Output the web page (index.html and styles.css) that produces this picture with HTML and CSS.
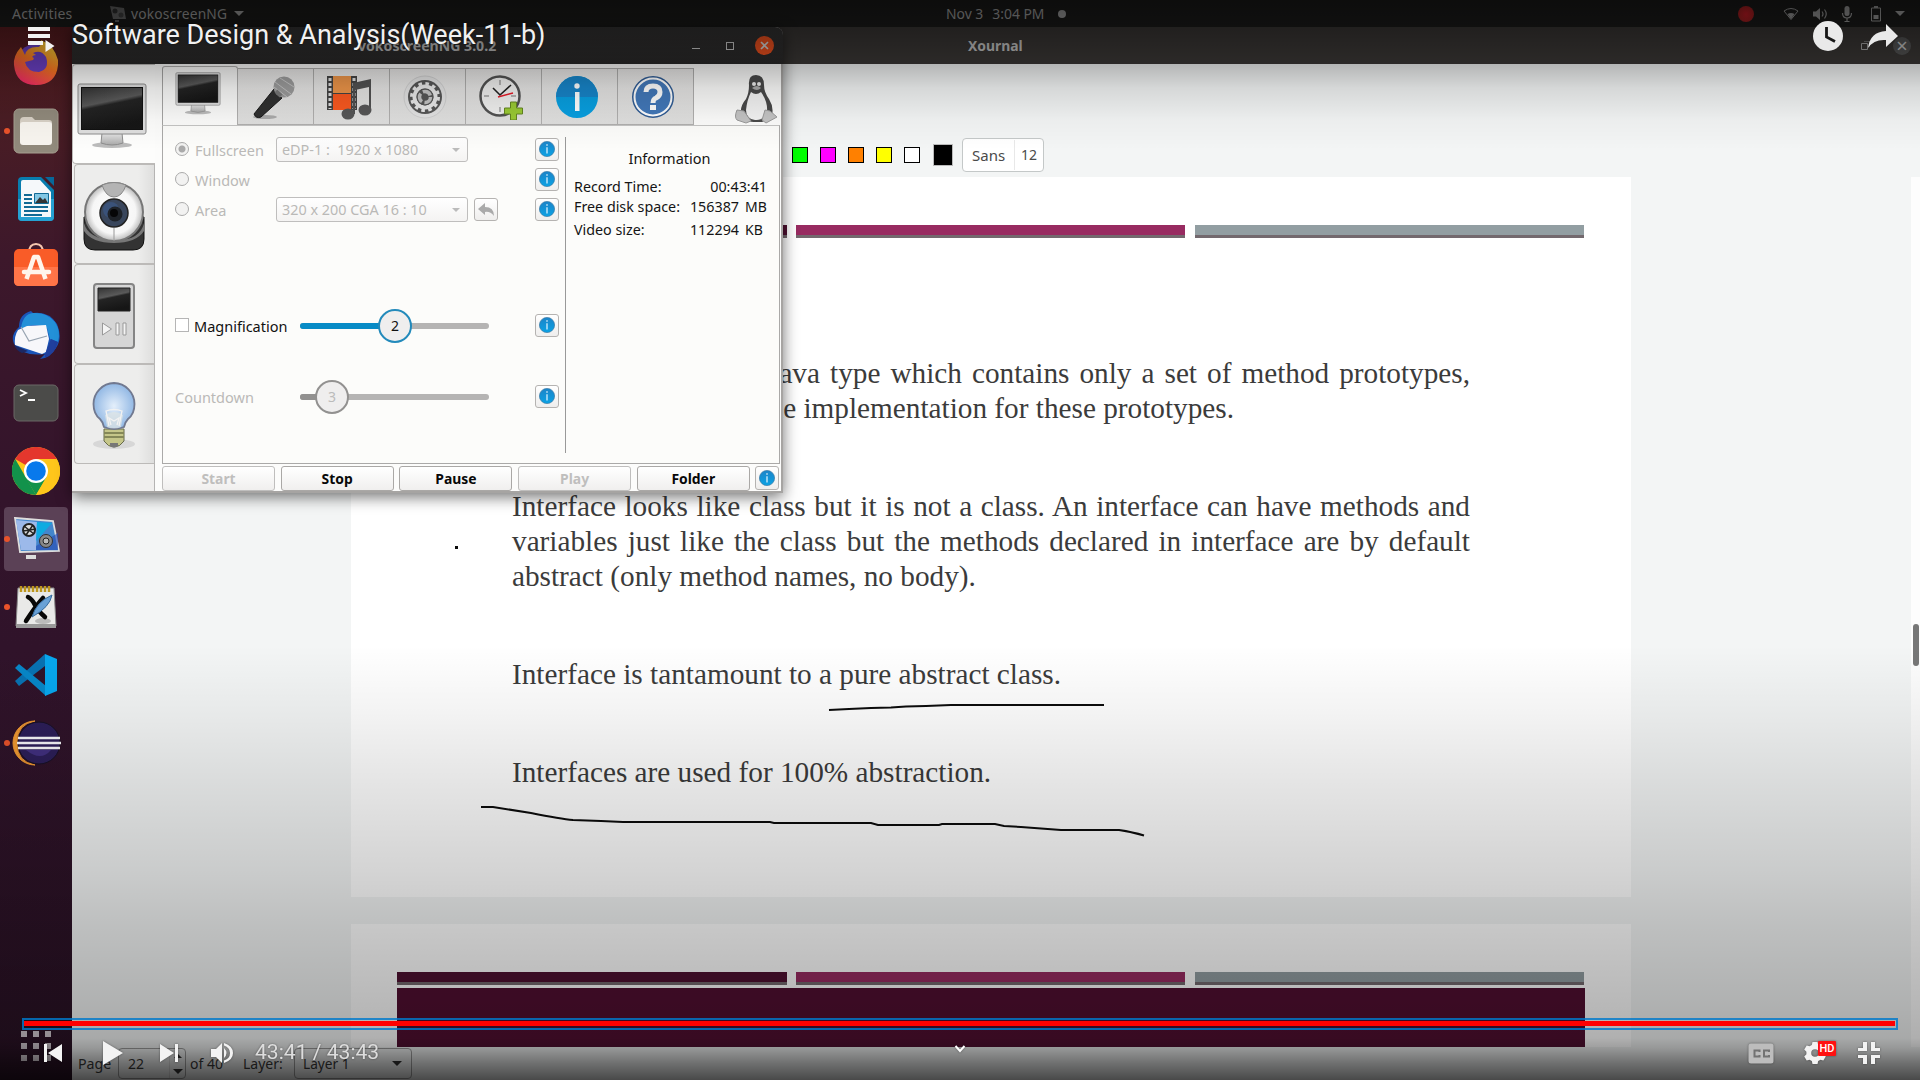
FILE: index.html
```html
<!DOCTYPE html>
<html lang="en">
<head>
<meta charset="utf-8">
<title>Software Design &amp; Analysis(Week-11-b)</title>
<link rel="stylesheet" href="styles.css">
</head>
<body>
<svg width="0" height="0" class="defs">
  <defs>
    <linearGradient id="screen" x1="0" y1="0" x2=".3" y2="1"><stop offset="0" stop-color="#333"/><stop offset=".42" stop-color="#5a5a5a"/><stop offset=".5" stop-color="#242424"/><stop offset="1" stop-color="#161616"/></linearGradient>
    <linearGradient id="infoBlue" x1="0" y1="0" x2="0" y2="1"><stop offset="0" stop-color="#1c84c8"/><stop offset="1" stop-color="#0ba2e4"/></linearGradient>
    <linearGradient id="metal" x1="0" y1="0" x2="0" y2="1"><stop offset="0" stop-color="#e6e6e6"/><stop offset="1" stop-color="#a9a9a9"/></linearGradient>
    <linearGradient id="fox" x1=".8" y1="0" x2=".3" y2="1"><stop offset="0" stop-color="#ffe13a"/><stop offset=".5" stop-color="#ff7a22"/><stop offset="1" stop-color="#f52a68"/></linearGradient>
    <radialGradient id="ball"><stop offset="0" stop-color="#fff"/><stop offset=".75" stop-color="#f6f6f6"/><stop offset="1" stop-color="#bbb"/></radialGradient>
    <radialGradient id="bulb"><stop offset="0" stop-color="#e4effb"/><stop offset="1" stop-color="#92b8e4"/></radialGradient>
    <symbol id="monitor" viewBox="0 0 70 66"><ellipse cx="35" cy="62" rx="20" ry="3" fill="#bbb"/><path d="M25 50h20l1 10q-11 4-22 0z" fill="url(#metal)" stroke="#8d8d8d"/><rect x="1" y="1" width="68" height="50" rx="2" fill="#dedede" stroke="#8c8c8c"/><rect x="4.500" y="4.500" width="61" height="42" fill="url(#screen)" stroke="#111"/></symbol>
    <symbol id="info" viewBox="0 0 16 16"><circle cx="8" cy="8" r="7.600" fill="url(#infoBlue)" stroke="#3b7ba6" stroke-width=".7"/><circle cx="8" cy="4" r=".8" fill="#fff"/><path d="M7.400 6.200h1.200v6.400H7.400z" fill="#e8f6ff"/></symbol>
  </defs>
</svg>

<div class="desktop">
  <header class="topbar">
    <span class="activities">Activities</span>
    <svg class="app-ico" width="16" height="16" viewBox="0 0 16 16"><path d="M0 0l14 2 2 11H3z" fill="#6b6b6b"/><path d="M5 14h4v2H5z" fill="#666"/><circle cx="5" cy="5" r="2.500" fill="#333"/><circle cx="11" cy="9" r="2.500" fill="#444"/></svg>
    <span class="app-name">vokoscreenNG</span>
    <i class="tri"></i>
    <div class="clock"><span>Nov 3</span><span>3:04 PM</span><i></i></div>
    <div class="tray">
      <i class="rec"></i>
      <svg width="16" height="14" viewBox="0 0 16 14"><path d="M1 4Q8-1 15 4L8 12.500z" fill="none" stroke="#a3a3a3"/><path d="M4.500 7Q8 5 11.500 7L8 12z" fill="#a3a3a3"/></svg>
      <svg width="16" height="14" viewBox="0 0 16 14"><path d="M1 4.500h3L8 1v12L4 9.500H1z" fill="#a3a3a3"/><path d="M10 4.500q2 2.500 0 5M12.500 2.500q3.500 4.500 0 9" fill="none" stroke="#a3a3a3" stroke-width="1.200"/></svg>
      <svg width="12" height="16" viewBox="0 0 12 16"><rect x="3.500" y="0" width="5" height="10" rx="2.500" fill="#a3a3a3"/><path d="M1.500 7q0 5 4.500 5t4.500-5M6 12v3M3.500 15.500h5" fill="none" stroke="#a3a3a3" stroke-width="1.200"/></svg>
      <svg class="batt" width="12" height="16" viewBox="0 0 12 16"><path d="M1.500 2h9v13h-9z" fill="none" stroke="#a3a3a3"/><path d="M4 0h4v2H4zM3.500 9h5v4h-5z" fill="#a3a3a3"/></svg>
      <i class="tri"></i>
    </div>
  </header>

  <div class="workspace">
    <nav class="dock">
      <div class="app"><svg class="up1" width="48" height="48" viewBox="0 0 48 48"><circle cx="24" cy="26" r="20" fill="#6c41c7"/><path d="M46 22Q42 7 29 2q1 4-2 7-12-1-14 8l-4-8Q1 18 2 27q2 20 22 20t22-20zM21 15q8-4 13 4 4 12-7 15-12 0-14-10l8-2q2-2-1-3 1-2 4-2z" fill="url(#fox)" fill-rule="evenodd"/></svg></div>
      <div class="app run"><svg width="46" height="46" viewBox="0 0 46 46"><rect x="1" y="1" width="44" height="44" rx="5" fill="#918a7c" stroke="#a69f90"/><path d="M7 13q0-4 4-4h8l3 3h14q3 0 3 3v5H7z" fill="#d8d1c6"/><rect x="7" y="14" width="32" height="23" rx="3" fill="#f8f5ef"/></svg></div>
      <div class="app"><svg width="38" height="46" viewBox="0 0 38 46"><path d="M5 1h19l13 13v27q0 4-4 4H5q-4 0-4-4V5q0-4 4-4z" fill="#087dae"/><path d="M1 23h36v18q0 4-4 4H5q-4 0-4-4z" fill="#25a2d3"/><path d="M6 4h17l11 12v25H4V6q0-2 2-2z" fill="#f5f8fa"/><path d="M28 1h9v9z" fill="#07689a"/><path d="M7 19h8M7 23h8M7 27h8M7 31h24M7 35h24M7 39h18" stroke="#116a95" stroke-width="2"/><path d="M17.500 17.500h14v10h-14z" fill="#82c7e4" stroke="#116a95"/><path d="M18 27l5-6 3 3 2-2 3 5z" fill="#333"/></svg></div>
      <div class="app"><svg class="up3" width="46" height="46" viewBox="0 0 46 46"><path d="M16 11q0-9 7-9t7 9" fill="none" stroke="#f4c6af" stroke-width="2"/><rect x="1" y="7" width="44" height="37" rx="5" fill="#f95c28"/><path d="M1 25h44v14q0 5-5 5H6q-5 0-5-5z" fill="#ff7548"/><path d="M13.500 37l7.500-22h4l7.500 22" stroke="#fff5eb" stroke-width="4.500" fill="none" stroke-linejoin="round"/><path d="M11 30h25" stroke="#fff5eb" stroke-width="4.500" stroke-linecap="round"/></svg></div>
      <div class="app"><svg width="50" height="50" viewBox="0 0 50 50"><path d="M8 17Q8 4 20 1l2 2Q38 1 46 14q6 14-1 24-6 10-16 11l5-5Q12 47 3 34-1 25 8 17z" fill="#1a55b8"/><path d="M10 18Q12 4 22 3q14-1 22 9 6 9 3 20l-8-3-3-11q-14-7-26 2z" fill="#2390d8"/><path d="M16 16L35 15l3 14-3 13-4 2L4 35q-1-9 3-15z" fill="#f7f7fa"/><path d="M10 17l8 14 18-5" stroke="#98a4b1" stroke-width="1.200" fill="none"/><path d="M34 44l6-15 7 3q-3 12-13 16z" fill="#203f9c"/><path d="M3 35l14 6-6 2q-6-3-8-8z" fill="#1b2864"/></svg></div>
      <div class="app"><svg width="46" height="38" viewBox="0 0 46 38"><rect x="1" y="1" width="44" height="36" rx="5" fill="#4b4b49" stroke="#6b6966"/><path d="M7 6l6 3-6 3M15 16h7" stroke="#fff" stroke-width="1.800" fill="none"/></svg></div>
      <div class="app"><svg width="48" height="48" viewBox="0 0 48 48"><circle cx="24" cy="24" r="24" fill="#ffc61b"/><path d="M24 24L3.200 12A24 24 0 0 1 44.800 12z" fill="#e4372d"/><path d="M3.200 12L24 48A24 24 0 0 1 3.200 12z" fill="#12924b"/><path d="M13 30l11 18 11-18z" fill="#12924b"/><path d="M34.400 30L24 48A24 24 0 0 0 44.800 12H24z" fill="#ffc61b"/><circle cx="24" cy="24" r="12" fill="#fff"/><circle cx="24" cy="24" r="9.800" fill="#0879ec"/></svg></div>
      <div class="app run active"><svg width="48" height="46" viewBox="0 0 48 46"><path d="M3 2l38 3 6 30-39 1z" fill="#4386cc" stroke="#ddd" stroke-width="1.800"/><path d="M4 4l21 2-1 28H9z" fill="#9cb9ea"/><path d="M25 6l15 1-16 18z" fill="#0eabe1"/><path d="M24 30L46 17v17H24z" fill="#294eb6" opacity=".65"/><circle cx="17" cy="14" r="6" fill="#ddd" stroke="#222" stroke-width="2"/><path d="M12 10l10 8M21 9l-7 10M11 15l13-2" stroke="#222" stroke-width="1.500"/><circle cx="34" cy="25" r="6.500" fill="#888" stroke="#333"/><circle cx="34" cy="25" r="3" fill="#bbb" stroke="#222"/><path d="M14 39h10v4H14z" fill="#ddd"/></svg></div>
      <div class="app run"><svg width="42" height="46" viewBox="0 0 42 46"><path d="M3 4h36l2 38H1z" fill="#e9e9e8" stroke="#888"/><path d="M1 40h40v4H1z" fill="#999"/><path d="M6 2v6M10 2v6M14 2v6M18 2v6M22 2v6M26 2v6M30 2v6M34 2v6" stroke="#bd961e" stroke-width="2.500"/><ellipse cx="28" cy="37" rx="8" ry="3" fill="#bbb"/><path d="M13 13q4 2 7 8t10 12M28 14q-8 9-17 23" stroke="#080808" stroke-width="4.500" fill="none" stroke-linecap="round"/><path d="M37 11q-2 12-20 22 4-15 20-22z" fill="#69a1d6" stroke="#366b9e"/></svg></div>
      <div class="app"><svg width="44" height="44" viewBox="0 0 44 44"><path d="M1 28l30-27v12L5 33z" fill="#0872b2"/><path d="M1 15l4-4 27 22v10z" fill="#0787c8"/><path d="M31 1l12 5v32l-12 5z" fill="#07a7ee"/></svg></div>
      <div class="app run"><svg width="50" height="46" viewBox="0 0 50 46"><path d="M24 1A22 22 0 0 0 24 45Q6 42 6 23T24 1z" fill="#f19a32" stroke="#f19a32"/><circle cx="28" cy="23" r="21" fill="#2c1e58" stroke="#171125"/><path d="M15 30h25q-10 12-25 0z" fill="#41307f"/><path d="M7 18h42M6 23h44M7 28h42" stroke="#f7f7fa" stroke-width="2.300"/></svg></div>
      <svg class="apps-grid" width="32" height="32" viewBox="0 0 32 32" fill="#d6cdd4"><path d="M1 1h6v6H1zM13 1h6v6h-6zM25 1h6v6h-6zM1 13h6v6H1zM13 13h6v6h-6zM25 13h6v6h-6zM1 25h6v6H1zM13 25h6v6h-6zM25 25h6v6h-6z"/></svg>
    </nav>

    <main class="xournal">
      <div class="x-title"><span>Xournal</span><svg width="9" height="9" viewBox="0 0 9 9" fill="none" stroke="#aaa"><path d="M.5 2.500h6v6h-6zM3 0h6v6"/></svg><b>×</b></div>
      <div class="x-tools"><i class="sw green"></i><i class="sw magenta"></i><i class="sw orange"></i><i class="sw yellow"></i><i class="sw white"></i><i class="sw black"></i><div class="font"><span>Sans</span><span>12</span></div></div>
      <div class="canvas">
        <div class="pages">
          <section class="page first">
            <div class="bars"><i></i><i></i><i></i></div>
            <div class="slide-text">
              <p class="p1"><span class="just l1">Java type which contains only a set of method prototypes,</span><span class="l2">the implementation for these prototypes.</span></p>
              <p class="p2"><span class="just">Interface looks like class but it is not a class. An interface can have methods and</span><span class="just">variables just like the class but the methods declared in interface are by default</span><span>abstract (only method names, no body).</span></p>
              <p class="p3">Interface is tantamount to a pure abstract class.</p>
              <p class="p4">Interfaces are used for 100% abstraction.</p>
            </div>
            <svg class="ink" width="1280" height="720" viewBox="351 177 1280 720" fill="none" stroke="#0c0c0c" stroke-width="2"><path d="M829 710l20-1 22-1 20-.5 15-1 20-.5 25-1h153"/><path d="M481 807h12l38 6q30 6 42 7l28 1 22 1h147l4 1h97l7 2h61l3-1h53l9 2 17 1 20 1.500 20 1.500h58q14 2 25 5.500"/><path d="M455 547.500h3" stroke-width="3"/></svg>
          </section>
          <section class="page second"><div class="bars"><i></i><i></i><i></i></div><div class="block"></div></section>
        </div>
        <div class="scroll"><i></i></div>
      </div>
      <footer class="status"><span class="s-page">Page</span><div class="spin"><span>22</span><div><i class="up"></i><i class="down"></i></div></div><span class="s-of">of 40</span><span class="s-layer">Layer:</span><div class="layer"><span>Layer 1</span><i class="down"></i></div></footer>
    </main>
  </div>

  <div class="voko">
    <div class="v-title"><span>vokoscreenNG 3.0.2</span><i class="min"></i><i class="max"></i><svg width="19" height="19" viewBox="0 0 19 19"><circle cx="9.500" cy="9.500" r="9.500" fill="#f2521f"/><path d="M6 6l7 7M13 6l-7 7" stroke="#ddd" stroke-width="1.600"/></svg></div>
    <div class="v-main">
      <div class="v-side">
        <div class="vt sel"><svg width="70" height="66"><use href="#monitor"/></svg></div>
        <div class="vt"><svg width="64" height="70" viewBox="0 0 64 70"><path d="M2 36v22q0 11 11 11h38q11 0 11-11V36z" fill="#333" stroke="#111"/><path d="M2 42q4 16 30 17t30-17v8q-8 12-30 12T2 50z" fill="#777"/><circle cx="32" cy="31" r="29" fill="url(#ball)" stroke="#777" stroke-width="2"/><path d="M20 4q12-5 24 0-4 12-12 12T20 4z" fill="#b4b4b4" stroke="#888"/><circle cx="32" cy="32" r="14" fill="#39465c" stroke="#222" stroke-width="1.500"/><circle cx="29" cy="29" r="8" fill="#3c5a8c" opacity=".6"/><circle cx="33" cy="33" r="7.500" fill="#1e2228"/><circle cx="32" cy="32" r="4" fill="#060607"/><path d="M32 47v13" stroke="#999"/></svg></div>
        <div class="vt"><svg width="42" height="66" viewBox="0 0 42 66"><rect x="1" y="1" width="40" height="64" rx="3" fill="#d6d6d6" stroke="#858585" stroke-width="2"/><path d="M5 5h32v23H5z" fill="url(#screen)" stroke="#222"/><path d="M9.500 40v12l9-6zM23 40h3v12h-3zM30 40h3v12h-3z" fill="#f4f4f4" stroke="#999"/></svg></div>
        <div class="vt"><svg width="46" height="70" viewBox="0 0 46 70"><ellipse cx="23" cy="63" rx="21" ry="5" fill="#d7d7d7"/><path d="M13 48h20v12q-4 6-10 6t-10-6z" fill="#c5c689" stroke="#666a4b"/><path d="M13 52h20M13 56h20" stroke="#858858" stroke-width="2"/><path d="M19 62h8v3q-4 3-8 0z" fill="#777"/><path d="M23 2a21 21 0 0 0-20.500 21q0 10 6.500 15 3 3 4 8 10 4 20 0 1-5 4-8 6.500-5 6.500-15A21 21 0 0 0 23 2z" fill="url(#bulb)" stroke="#717990" stroke-width="1.800"/><path d="M14 34q9-6 18 0l-2 12q-7 3-14 0z" fill="#dfe6e4" opacity=".7"/><path d="M18 45l-3-15q8-3 16 0l-3 15M20 44l-2-7 5 3 5-3-2 7" fill="none" stroke="#f2f2f2" stroke-width="1.300"/></svg></div>
      </div>
      <div class="v-content">
        <div class="tabs">
          <div class="tab sel"><svg width="46" height="43"><use href="#monitor"/></svg></div>
          <div class="tab"><svg width="46" height="46" viewBox="0 0 46 46"><ellipse cx="15" cy="43" rx="12" ry="2" fill="#aaa"/><path d="M24 15l8 9L11 43q-5 2-7-3z" fill="#303030" stroke="#181818"/><circle cx="34" cy="13" r="10.500" fill="#9c9c9c"/><path d="M25 8l16 12M24 13l13 10M30 4l14 9" stroke="#c4c4c4" stroke-width="1"/><path d="M26 17l5 5" stroke="#777" stroke-width="4"/></svg></div>
          <div class="tab"><svg width="46" height="46" viewBox="0 0 46 46"><path d="M1 2h30v34H1z" fill="#444"/><path d="M7 2h18v17H7z" fill="#ed9549"/><path d="M7 20h18v16H7z" fill="#fb5920"/><path d="M4 4v31M28 4v31" stroke="#ddd" stroke-width="3" stroke-dasharray="3 2"/><path d="M27 9l18-4v31h-2V13l-14 3v24h-2z" fill="#525252"/><ellipse cx="22" cy="40" rx="6.500" ry="5.500" fill="#575757"/><ellipse cx="39" cy="36" rx="6.500" ry="5.500" fill="#575757"/></svg></div>
          <div class="tab"><svg width="44" height="44" viewBox="0 0 44 44"><circle cx="22" cy="22" r="21" fill="#e3e3e3" stroke="#d0d0d0"/><circle cx="22" cy="22" r="17" fill="#575757"/><circle cx="22" cy="22" r="10.500" fill="none" stroke="#e9e9e9" stroke-width="4"/><circle cx="22" cy="22" r="13.500" fill="none" stroke="#e9e9e9" stroke-width="3" stroke-dasharray="3.600 3.468"/><circle cx="22" cy="22" r="8.500" fill="#575757"/><circle cx="22" cy="22" r="5.500" fill="none" stroke="#c4c4c4" stroke-width="3.500" stroke-dasharray="9 2.520"/></svg></div>
          <div class="tab"><svg width="46" height="46" viewBox="0 0 46 46"><circle cx="22" cy="22" r="19.500" fill="#f0f0ef" stroke="#525252" stroke-width="2.500"/><path d="M22 6v5M22 33v5M6 22h5M33 22h5" stroke="#777"/><path d="M15 14l7 7 11-10" stroke="#222" stroke-width="1.600" fill="none"/><path d="M20 23l15-4" stroke="#e71c29" stroke-width="1.500"/><path d="M32.500 28h6v6h6v6h-6v6h-6v-6h-6v-6h6z" fill="#9aca34" stroke="#648620"/></svg></div>
          <div class="tab"><svg width="44" height="44" viewBox="0 0 44 44"><circle cx="22" cy="22" r="21" fill="#089fe0"/><path d="M1 22a21 21 0 0 1 42 0z" fill="#1785c9"/><circle cx="22" cy="11" r="2.700" fill="#fff"/><path d="M20 17h4.500v19H20z" fill="#fff"/></svg></div>
          <div class="tab"><svg width="44" height="44" viewBox="0 0 44 44"><circle cx="22" cy="22" r="20" fill="#4278b9" stroke="#315d95" stroke-width="2"/><circle cx="22" cy="22" r="18.500" fill="none" stroke="#fff" stroke-width="2"/><path d="M15 17q0-6 7-6t7 6q0 4-4 6-3 1-3 5" fill="none" stroke="#fff" stroke-width="5"/><path d="M19 30h6v5h-6z" fill="#fff"/></svg></div>
          <svg class="tux" width="42" height="50" viewBox="0 0 42 50"><path d="M14 11Q13 1 21 1t8 10q0 7 5 14 5 8 3 16-4 8-16 7-13 1-15-9-1-7 5-14 3-6 3-14z" fill="#494949"/><path d="M16 18q5 4 10 0 7 10 6 20-4 9-12 8-9-1-9-10 1-10 5-18z" fill="#f3f3f3"/><path d="M2 36l7 1 7 10-5 2-9-3q-3-3 0-10zM30 36l5 1q6 5 7 6l-11 6-4-3z" fill="#c3c3c3" stroke="#999"/><circle cx="19" cy="10" r="2" fill="#eee"/><circle cx="24" cy="10" r="2" fill="#eee"/><path d="M17 14q5-4 9 0-4 4-9 0z" fill="#aaa"/></svg>
        </div>
        <div class="pane">
          <div class="options">
            <div class="row r1 dis"><i class="radio on"></i><label>Fullscreen</label><div class="combo first-combo"><span>eDP-1 :&nbsp; 1920 x 1080</span><i></i></div><div class="ib"><svg width="16" height="16"><use href="#info"/></svg></div></div>
            <div class="row dis"><i class="radio"></i><label>Window</label><div class="ib"><svg width="16" height="16"><use href="#info"/></svg></div></div>
            <div class="row dis"><i class="radio"></i><label>Area</label><div class="combo"><span>320 x 200 CGA 16 : 10</span><i></i></div><div class="ib undo"><svg width="18" height="16" viewBox="0 0 18 16"><path d="M1 7l7-6v4q9 0 9 9-4-5-9-4v3z" fill="#aaa"/></svg></div><div class="ib"><svg width="16" height="16"><use href="#info"/></svg></div></div>
            <div class="row mag"><i class="check"></i><label>Magnification</label><div class="slider s2"><i></i><b>2</b></div><div class="ib"><svg width="16" height="16"><use href="#info"/></svg></div></div>
            <div class="row cnt dis"><label>Countdown</label><div class="slider s3"><i></i><b>3</b></div><div class="ib"><svg width="16" height="16"><use href="#info"/></svg></div></div>
          </div>
          <div class="facts">
            <h3>Information</h3>
            <div class="fact"><span>Record Time:</span><b>00:43:41</b></div>
            <div class="fact f2"><span>Free disk space:</span><b>156387</b><em>MB</em></div>
            <div class="fact f3"><span>Video size:</span><b>112294</b><em>KB</em></div>
          </div>
        </div>
        <div class="btns"><button class="off">Start</button><button>Stop</button><button>Pause</button><button class="off">Play</button><button>Folder</button><div class="ib"><svg width="16" height="16"><use href="#info"/></svg></div></div>
      </div>
    </div>
  </div>
</div>

<div class="player">
  <div class="p-top">
    <svg class="list" width="27" height="26" viewBox="0 0 27 26" fill="#f2f2f2"><path d="M0 0h22v4H0zM0 7h22v4H0zM0 14h15v4H0zM17.500 13l9 6-9 6z"/></svg>
    <h1>Software Design &amp; Analysis(Week-11-b)</h1>
    <svg class="later" width="30" height="30" viewBox="0 0 30 30"><circle cx="15" cy="15" r="15" fill="#e9e9e9"/><path d="M13.500 6v10l8.500 4.500" stroke="#171717" stroke-width="2.800" fill="none"/></svg>
    <svg class="share" width="31" height="25" viewBox="0 0 31 25"><path d="M19 0l12 12-12 11v-7Q7 15 1 24 3 8 19 7z" fill="#e9e9e9"/></svg>
  </div>
  <div class="p-bottom">
    <div class="progress"><i></i></div>
    <div class="controls">
      <svg class="prev" width="18" height="18" viewBox="0 0 18 18"><path d="M0 0h3v18H0zM18 0v18L4 9z"/></svg>
      <svg class="play" width="20" height="24" viewBox="0 0 20 24"><path d="M0 0l20 12L0 24z"/></svg>
      <svg class="next" width="18" height="18" viewBox="0 0 18 18"><path d="M0 0l14 9-14 9zM15 0h3v18h-3z"/></svg>
      <svg class="vol" width="22" height="20" viewBox="0 0 22 20"><path d="M0 6h5l6-6v20l-6-6H0zM13 5q5 5 0 10zM13 0q9 3 9 10t-9 10v-2.500q6-2 6-7.500t-6-7.500z"/></svg>
      <span class="time">43:41 / 43:43</span>
      <svg class="chev" width="12" height="8" viewBox="0 0 12 8"><path d="M1.500 1L6 6l4.500-5" fill="none" stroke="#fff" stroke-width="2"/></svg>
      <svg class="cc" width="26" height="21" viewBox="0 0 26 21"><rect x=".5" y=".5" width="25" height="20" rx="2.500" fill="#bdbdbd"/><path d="M11.500 9V7.500h-5v6h5V12M21 9V7.500h-5v6h5V12" fill="none" stroke="#727272" stroke-width="2"/></svg>
      <div class="gear"><svg width="22" height="22" viewBox="0 0 22 22"><path fill-rule="evenodd" d="M8.500 0h5l.7 3 2.300 1.300L19.300 3.500l2.500 4-2.200 2.200v2.600l2.200 2.200-2.500 4-2.800-.8-2.300 1.300-.7 3h-5l-.7-3-2.300-1.300-2.800.8-2.500-4L2.400 12.300V9.700L.2 7.500l2.500-4 2.800.8L7.800 3zM11 7.200a3.800 3.800 0 1 0 0 7.600 3.800 3.800 0 1 0 0-7.600z"/></svg><span>HD</span></div>
      <svg class="exit" width="22" height="22" viewBox="0 0 22 22"><path d="M5 0h4v9H0V6h5zM13 0h4v6h5v3h-9zM0 13h9v9H5v-6H0zM13 13h9v3h-5v6h-4z"/></svg>
    </div>
  </div>
</div>
</body>
</html>
```
FILE: styles.css
```css
* { box-sizing: border-box; }
body { margin: 0; width: 1920px; height: 1080px; overflow: hidden; position: relative; background: #000; font-family: "Noto Sans", sans-serif; font-size: 14px; }
.defs { position: absolute; }
svg { display: block; flex: none; }
p, h1, h3 { margin: 0; font-weight: 400; }

.desktop { height: 1080px; position: relative; display: flex; flex-direction: column; }
.topbar { height: 27px; flex: none; background: #1c1c1b; color: #a8a8a8; display: flex; align-items: center; padding: 0 15px 0 12px; position: relative; }
.activities { width: 98px; font-size: 14px; letter-spacing: .22px; }
.app-name { margin: 0 5px; width: 98px; font-size: 13.800px; letter-spacing: .15px; }
.tri { border: 5px solid transparent; border-top-color: #a8a8a8; border-bottom: 0; }
.clock { display: flex; align-items: center; gap: 9px; position: absolute; left: 946px; font-size: 13.900px; white-space: nowrap; }
.clock i { width: 8px; height: 8px; border-radius: 50%; background: #a8a8a8; margin-left: 5px; }
.tray { margin-left: auto; display: flex; align-items: center; gap: 13px; }
.batt { margin-left: 4px; }
.rec { width: 16px; height: 16px; border-radius: 50%; background: radial-gradient(#d61d28, #9c2320); margin-right: 16px; }

.workspace { flex: 1; display: flex; min-height: 0; }
.dock { width: 72px; background: linear-gradient(#5a1c20, #4a1d24 90px, #3d182b 230px, #33142b 470px, #30132a 620px, #2a1225); display: flex; flex-direction: column; padding: 4px 4px 18px; }
.app { height: 64px; margin-bottom: 4px; display: flex; align-items: center; justify-content: center; border-radius: 4px; position: relative; flex: none; }
.app.active { background: #5b4156; }
.app.run::before { content: ""; position: absolute; left: 0; top: 29px; width: 6px; height: 6px; border-radius: 50%; background: #e9532b; }
.up1 { margin-bottom: 3px; }
.up3 { margin-bottom: 5px; }
.apps-grid { margin: auto 0 0 16px; }

.xournal { flex: 1; display: flex; flex-direction: column; background: #f3f5f5; min-width: 0; }
.x-title { height: 37px; flex: none; background: #3b3836; color: #c9c9c9; font-weight: 700; font-size: 13.900px; display: flex; align-items: center; padding-right: 9px; }
.x-title span { margin-left: 896px; margin-right: auto; }
.x-title svg { margin-right: 23px; }
.x-title b { width: 18px; height: 18px; border-radius: 50%; background: #555; font: 20px/17px "Noto Sans", sans-serif; text-align: center; }
.x-tools { height: 113px; flex: none; display: flex; align-items: center; padding: 69px 0 0 720px; gap: 12px; }
.sw { width: 16px; height: 16px; border: 1px solid #000; flex: none; }
.green { background: #0f0; } .magenta { background: #f0f; } .orange { background: #ff8000; } .yellow { background: #ff0; } .white { background: #fff; }
.sw.black { width: 20px; height: 22px; background: #000; border-color: #bbb; margin-left: 1px; }
.font { width: 82px; height: 34px; margin-left: -3px; border: 1px solid #c4c8c8; border-radius: 4px; background: #fff; display: flex; align-items: center; color: #4a4a4a; flex: none; }
.font span { line-height: 30px; padding-left: 9px; width: 51px; font-size: 15px; }
.font span + span { border-left: 1px solid #e8e8e8; padding-left: 6px; width: 29px; font-size: 14px; }
.canvas { height: 870px; flex: none; display: flex; justify-content: space-between; overflow: hidden; }
.pages { width: 1280px; margin-left: 279px; display: flex; flex-direction: column; gap: 27px; }
.page { background: #fff; flex: none; padding: 0 46px; position: relative; }
.first { height: 720px; padding-top: 48px; }
.second { height: 123px; padding-top: 48px; }
.bars { height: 13px; display: grid; grid-template-columns: 390px 389px 389px; column-gap: 9px; }
.bars i { background: #4e1030; border-bottom: 3px solid #73696e; }
.bars i:nth-child(2) { background: #982b61; }
.bars i:nth-child(3) { background: #929ea2; margin: 0 -1px 0 1px; }
.block { height: 60px; width: 1188px; margin-top: 3px; background: #510f31; }
.slide-text { width: 959px; margin: 117.500px 0 0 115px; font: 29.260px/35px "Liberation Serif", serif; color: #3b3b3b; }
.slide-text p { white-space: nowrap; }
.slide-text span { display: block; }
.slide-text .just { width: 958px; text-align: justify; text-align-last: justify; white-space: normal; }
.slide-text .l1 { margin-left: 256px; width: 702px; }
.l2 { text-align: right; padding-right: 237px; }
.p1 { margin-bottom: 63px; }
.p2 { margin-bottom: 63px; }
.p3 { margin-bottom: 63px; }
.ink { position: absolute; left: 0; top: 0; }
.scroll { width: 9px; background: #fdfdfd; padding: 447px 1px 0 2px; }
.scroll i { display: block; height: 42px; border-radius: 3px; background: #777; }
.status { flex: 1; display: flex; align-items: center; padding-left: 6px; color: #3a3a3a; font-size: 14px; }
.s-page { width: 40px; font-size: 14.200px; }
.spin, .layer { height: 31px; border: 1px solid #a0a0a0; border-radius: 4px; display: flex; align-items: center; }
.spin { width: 68px; padding-left: 9px; justify-content: space-between; }
.spin div { width: 16px; height: 29px; border-left: 1px solid #ddd; display: flex; flex-direction: column; justify-content: space-between; align-items: center; padding: 5px 0 4px; }
.up { border: 4px solid transparent; border-bottom-color: #333; border-top: 0; }
.down { border: 5px solid transparent; border-top-color: #333; border-bottom: 0; }
.s-of { margin-left: 4px; width: 53px; white-space: nowrap; }
.s-layer { width: 51px; font-size: 14px; }
.layer { width: 118px; padding: 0 9px 0 8px; justify-content: space-between; font-size: 13.700px; }

/* recorder window */
.voko { position: absolute; left: 72px; top: 27px; width: 711px; height: 466px; display: flex; flex-direction: column; border: solid #a6a4a2; border-width: 0 2px 2px 0; background: #f3f2f1; border-radius: 0 8px 0 0; box-shadow: 0 4px 15px rgba(0,0,0,.55); }
.v-title { height: 37px; flex: none; margin-right: -2px; border-radius: 0 8px 0 0; background: linear-gradient(#343333, #292828); display: flex; align-items: center; color: #bdbdbd; font-size: 14.100px; font-weight: 700; padding-right: 9px; }
.v-title span { margin: 0 auto 0 286px; white-space: nowrap; }
.min { width: 8px; height: 1px; background: #ccc; margin: 5px 26px 0 0; }
.max { width: 8px; height: 8px; border: 1px solid #ccc; margin-right: 21px; }
.v-main { flex: 1; display: flex; min-height: 0; }
.v-side { width: 83px; flex: none; border-right: 1px solid #b5b4b3; padding-left: 2px; background: #f0efee; }
.vt { height: 100px; border: 1px solid #bcbab8; border-top-width: 1px; border-right: 0; border-radius: 4px 0 0 4px; background: linear-gradient(90deg, #ededec 80%, #dededd); display: flex; align-items: center; justify-content: center; padding: 3px 2px 0 0; }
.vt.sel { margin-left: -2px; background: #fdfdfc; margin-right: -1px; padding: 3px 4px 0 0; }
.v-content { flex: 1; display: flex; flex-direction: column; padding: 2px 0 1px 7px; background: #fcfcfb; min-width: 0; }
.tabs { height: 59px; display: flex; align-items: flex-end; flex: none; }
.tab { width: 76px; height: 57px; border: 1px solid #b0afae; border-left: 0; background: linear-gradient(#ecebea, #dededd); display: flex; align-items: center; justify-content: center; padding-right: 5px; }
.tab.sel { height: 59px; border-left: 1px solid #a5a4a3; border-bottom: 0; border-radius: 3px 3px 0 0; background: #fbfbfa; padding-bottom: 6px; }
.tux { margin: 0 4px 1px auto; }
.pane { height: 339px; width: 618px; border: 1px solid #aaa9a8; border-top-color: #c4c4c3; display: flex; flex: none; padding: 11px 0 10px 12px; background: #fcfcfa; }
.options { width: 391px; border-right: 1px solid #999; }
.row { height: 25px; display: flex; align-items: center; margin-bottom: 5px; padding-right: 6px; white-space: nowrap; }
.row .ib:last-child { margin-left: auto; margin-bottom: 1px; }
.dis { color: #bab9b7; }
.radio { width: 14px; height: 14px; border: 1px solid #aaa; border-radius: 50%; margin: 0 6px 1px 0; background: #f2f2f1; flex: none; }
.radio.on { background: radial-gradient(circle, #aaa 0 3px, #f2f2f1 4px); }
.row label { width: 81px; font-size: 14.500px; }
.combo { width: 192px; height: 25px; border: 1px solid #bfbebd; border-radius: 3px; background: linear-gradient(#fff, #f4f3f2); display: flex; align-items: center; justify-content: space-between; padding: 0 7px 0 5px; font-size: 14.400px; }
.first-combo { font-size: 14.400px; }
.combo i { border: 4px solid transparent; border-top-color: #bbb; border-bottom: 0; }
.ib { width: 24px; height: 23px; border: 1px solid #b5b3b1; border-radius: 3px; background: linear-gradient(#fff, #efeeed); display: flex; align-items: center; justify-content: center; flex: none; }
.undo { margin-left: 6px; }
.mag { margin-top: 91px; }
.check { width: 14px; height: 14px; border: 1px solid #b5b5b5; background: #fff; margin: 0 5px 1px 0; }
.row.mag label { width: 106px; font-size: 14.500px; color: #111; }
.cnt { margin-top: 46px; }
.row.cnt label { width: 125px; }
.slider { width: 189px; height: 6px; border-radius: 3px; background: #b5b4b3; position: relative; }
.slider i { display: block; height: 6px; border-radius: 3px; background: #078bc6; width: 94px; }
.slider b { position: absolute; left: 78px; top: -14px; width: 34px; height: 34px; line-height: 30px; text-align: center; border: 2px solid #238abb; border-radius: 50%; background: #efeeee; font-weight: 400; color: #111; }
.s3 i { width: 32px; background: #929190; }
.slider.s3 b { left: 15px; border-color: #929190; color: #bbb; }
.facts { padding: 9px 12px 0 8px; flex: 1; color: #151515; font-size: 14.300px; }
.facts h3 { font-size: 14.500px; line-height: 24px; text-align: center; padding-right: 2px; }
.fact { height: 20px; line-height: 20px; margin-top: 7px; display: flex; white-space: nowrap; }
.fact b { margin-left: auto; font-weight: 400; }
.fact em { font-style: normal; width: 28px; padding-left: 6px; font-size: 14px; }
.f2 { margin-top: 0; } .f3 { margin-top: 3px; }
.btns { display: flex; gap: 5.700px; padding-top: 2px; align-items: flex-start; }
.btns button { width: 113px; height: 25px; padding: 0; border: 1px solid #aaa8a6; border-radius: 3px; background: linear-gradient(#fff, #f0efee); font: 700 13.900px "Noto Sans", sans-serif; color: #080808; }
.btns button.off { color: #bfbebd; border-color: #bfbebd; }
.btns .ib { height: 24px; }

/* player chrome over the recording */
.player { position: absolute; inset: 0; display: flex; flex-direction: column; justify-content: space-between; background: linear-gradient(rgba(0,0,0,.55), rgba(0,0,0,.44) 27px, rgba(0,0,0,.26) 64px, rgba(0,0,0,.12) 88px, rgba(0,0,0,.03) 120px, transparent 150px, transparent 645px, rgba(0,0,0,.05) 717px, rgba(0,0,0,.1) 780px, rgba(0,0,0,.17) 870px, rgba(0,0,0,.22) 925px, rgba(0,0,0,.28) 1005px, rgba(0,0,0,.31) 1038px, rgba(0,0,0,.38) 1048px, rgba(0,0,0,.54) 1063px, rgba(0,0,0,.7)); }
.p-top { display: flex; height: 60px; padding: 0 22px 0 28px; }
.list { margin: 27px 17px 0 0; }
.p-top h1 { font: 27px/32px Roboto, sans-serif; color: #f1f1f1; margin-top: 19px; white-space: nowrap; text-shadow: 0 0 2px rgba(0,0,0,.6); }
.later { margin: 21px 24px 0 auto; }
.share { margin-top: 24px; }
.p-bottom { height: 62px; padding: 0 22px; }
.progress { height: 12px; border: 2px solid rgba(0,122,204,.82); padding: 1px 1px 1px 0; }
.progress i { display: block; height: 5px; background: #f00; }
.controls { display: flex; align-items: center; height: 46px; fill: #f3f3f3; padding: 0 18px 0 22px; filter: drop-shadow(0 0 1px rgba(0,0,0,.4)); }
.play { margin-left: 41px; }
.next { margin-left: 37px; }
.vol { margin-left: 33px; }
.time { font: 21.100px/26px Roboto, sans-serif; color: #ddd; margin: -2px 0 0 22px; width: 119px; white-space: nowrap; }
.chev { margin: -8px auto 0 580px; }
.gear { margin: 0 32px 0 30px; position: relative; }
.gear span { position: absolute; left: 14px; top: -1px; width: 18px; height: 15px; border-radius: 1px; background: #f11; color: #fff; font: 500 11px/15px Roboto, sans-serif; text-align: center; }
```
